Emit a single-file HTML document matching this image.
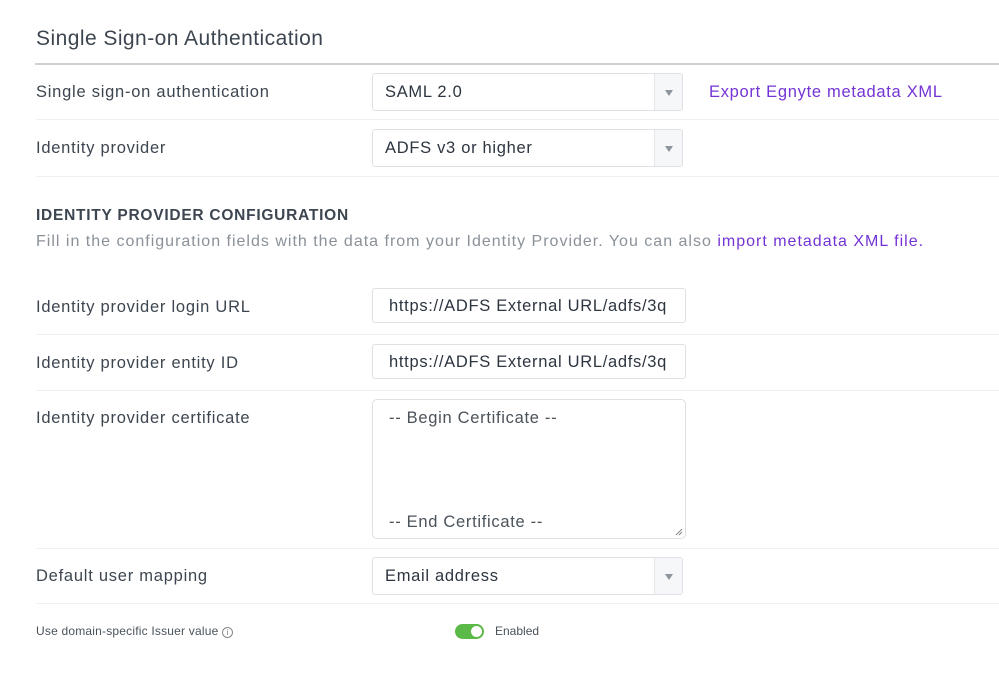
<!DOCTYPE html>
<html><head><style>
body{margin:0;width:999px;height:686px;background:#fff;font-family:"Liberation Sans",sans-serif;color:#3d4650;position:relative;overflow:hidden}
.a{position:absolute;white-space:nowrap}
.lbl{position:absolute;left:36px;font-size:16.5px;letter-spacing:0.75px;white-space:nowrap}
.sep{position:absolute;left:36px;right:0;height:1px;background:#eef0f2}
.box{position:absolute;left:372px;width:311px;border:1px solid #dde1e5;border-radius:3px;background:#fff;box-sizing:border-box;font-size:16.5px;color:#2c3540;letter-spacing:0.7px}
.sel .t{position:absolute;left:12px;top:9px}
.sel .ar{position:absolute;right:0;top:0;bottom:0;width:27px;border-left:1px solid #e4e7ea;background:#f6f7f8}
.sel .ar:after{content:"";position:absolute;left:10px;top:16px;border-left:4px solid transparent;border-right:4px solid transparent;border-top:6px solid #8d949b}
.link{color:#7434d4}
</style></head><body>
<div class="a" style="left:36px;top:27px;font-size:21px;color:#3d4650;letter-spacing:0.45px">Single Sign-on Authentication</div>
<div class="a" style="left:35px;right:0;top:63px;height:2px;background:#cfd2d5"></div>

<div class="lbl" style="top:83px">Single sign-on authentication</div>
<div class="box sel" style="top:73px;height:38px"><span class="t">SAML 2.0</span><div class="ar"></div></div>
<div class="a link" style="left:709px;top:83px;font-size:16.5px;letter-spacing:0.7px">Export Egnyte metadata XML</div>
<div class="sep" style="top:119px"></div>

<div class="lbl" style="top:139px">Identity provider</div>
<div class="box sel" style="top:129px;height:38px"><span class="t">ADFS v3 or higher</span><div class="ar"></div></div>
<div class="sep" style="top:176px"></div>

<div class="a" style="left:36px;top:207px;font-size:15.5px;font-weight:bold;color:#3d4650;letter-spacing:0.75px">IDENTITY PROVIDER CONFIGURATION</div>
<div class="a" style="left:36px;top:233px;font-size:16px;color:#8a9199;letter-spacing:1px">Fill in the configuration fields with the data from your Identity Provider. You can also <span class="link">import metadata XML file.</span></div>

<div class="lbl" style="top:298px">Identity provider login URL</div>
<div class="box" style="top:288px;height:35px;width:314px;overflow:hidden;white-space:nowrap"><span style="position:absolute;left:16px;top:8px">https://ADFS External URL/adfs/3q</span></div>
<div class="sep" style="top:334px"></div>

<div class="lbl" style="top:354px">Identity provider entity ID</div>
<div class="box" style="top:344px;height:35px;width:314px;overflow:hidden;white-space:nowrap"><span style="position:absolute;left:16px;top:8px">https://ADFS External URL/adfs/3q</span></div>
<div class="sep" style="top:390px"></div>

<div class="lbl" style="top:409px">Identity provider certificate</div>
<div class="box" style="top:399px;height:140px;width:314px;border-radius:5px;color:#4a525a;white-space:nowrap">
<span style="position:absolute;left:16px;top:9px">-- Begin Certificate --</span>
<span style="position:absolute;left:16px;top:113px">-- End Certificate --</span>
<svg style="position:absolute;right:2px;bottom:2px" width="9" height="9"><path d="M8 2L2 8M8 5L5 8" stroke="#888" stroke-width="1"/></svg>
</div>
<div class="sep" style="top:548px"></div>

<div class="lbl" style="top:567px">Default user mapping</div>
<div class="box sel" style="top:557px;height:38px"><span class="t">Email address</span><div class="ar"></div></div>
<div class="sep" style="top:603px"></div>

<div class="a" style="left:36px;top:624px;font-size:12px;color:#4a525a;letter-spacing:0.2px">Use domain-specific Issuer value <span style="display:inline-block;width:9px;height:9px;border:1px solid #888;border-radius:50%;font-size:8px;line-height:9px;text-align:center;color:#777;letter-spacing:0">i</span></div>
<div class="a" style="left:455px;top:624px;width:29px;height:15px;border-radius:8px;background:#5bb947"></div>
<div class="a" style="left:471px;top:626px;width:11px;height:11px;border-radius:50%;background:#fff"></div>
<div class="a" style="left:495px;top:624px;font-size:12px;color:#4a525a">Enabled</div>
</body></html>
